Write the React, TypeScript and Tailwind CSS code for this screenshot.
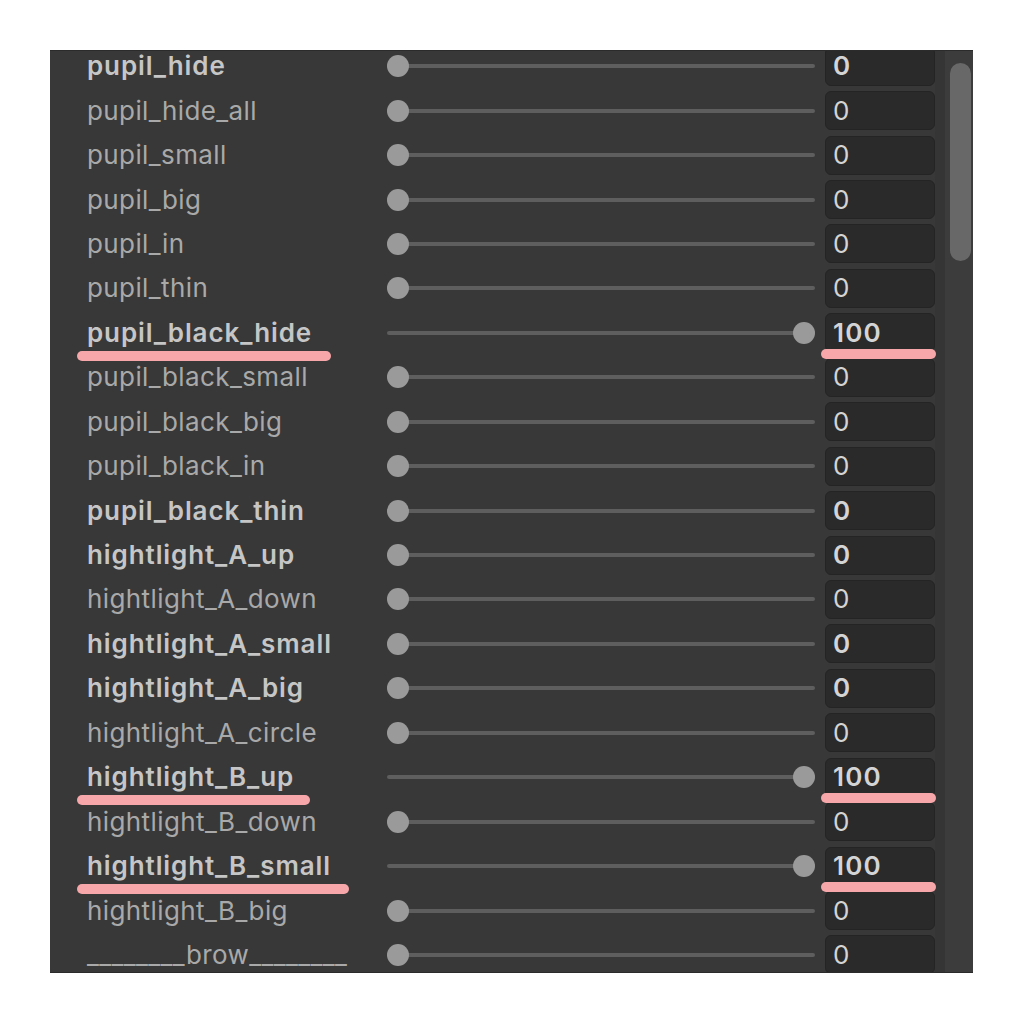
import React from "react";

type Row = {
  name: string;
  value: number;
  bold?: boolean;
  mark?: number; // width of the pink underline under the label
};

const rows: Row[] = [
  { name: "pupil_hide", value: 0, bold: true },
  { name: "pupil_hide_all", value: 0 },
  { name: "pupil_small", value: 0 },
  { name: "pupil_big", value: 0 },
  { name: "pupil_in", value: 0 },
  { name: "pupil_thin", value: 0 },
  { name: "pupil_black_hide", value: 100, bold: true, mark: 254 },
  { name: "pupil_black_small", value: 0 },
  { name: "pupil_black_big", value: 0 },
  { name: "pupil_black_in", value: 0 },
  { name: "pupil_black_thin", value: 0, bold: true },
  { name: "hightlight_A_up", value: 0, bold: true },
  { name: "hightlight_A_down", value: 0 },
  { name: "hightlight_A_small", value: 0, bold: true },
  { name: "hightlight_A_big", value: 0, bold: true },
  { name: "hightlight_A_circle", value: 0 },
  { name: "hightlight_B_up", value: 100, bold: true, mark: 233 },
  { name: "hightlight_B_down", value: 0 },
  { name: "hightlight_B_small", value: 100, bold: true, mark: 272 },
  { name: "hightlight_B_big", value: 0 },
  { name: "________brow________", value: 0 },
];

function Slider({ value }: { value: number }) {
  return (
    <div className="relative w-[428px] h-[22px] flex items-center">
      <div className="w-full h-[4px] rounded-full bg-[#5e5e5e]" />
      <div
        className={`absolute top-0 w-[22px] h-[22px] rounded-full bg-[#9a9a9a] ${
          value >= 100 ? "right-0" : "left-0"
        }`}
      />
    </div>
  );
}

function ShapeRow({ row }: { row: Row }) {
  return (
    <div className="relative h-[44.45px] shrink-0 flex items-center">
      <div
        className={`w-[337px] pl-[37px] text-[26px] leading-none ${
          row.bold
            ? "font-semibold tracking-[0.9px] text-[#c6c6c6]"
            : "font-normal tracking-[0.4px] text-[#a9a9a9]"
        }`}
      >
        {row.name}
      </div>
      <Slider value={row.value} />
      <div className="ml-[10px] w-[110px] h-[39px] rounded-[6px] bg-[#2a2a2a] border border-[#242424] flex items-center pl-[7px]">
        <span
          className={`text-[26px] leading-none tracking-[1.2px] text-[#d4d4d4] ${
            row.bold ? "font-semibold" : "font-normal"
          }`}
        >
          {row.value}
        </span>
      </div>

      {row.mark && (
        <>
          <div
            className="absolute z-10 left-[27px] top-[40px] h-[10px] rounded-full bg-[#f7a7aa]"
            style={{ width: row.mark }}
          />
          <div className="absolute z-10 left-[771px] top-[38px] w-[115px] h-[10px] rounded-full bg-[#f7a7aa]" />
        </>
      )}
    </div>
  );
}

export default function App() {
  return (
    <div
      className="w-[1024px] h-[1024px] bg-white pt-[50px] pl-[50px]"
      style={{ fontFamily: "Inter, 'Noto Sans', sans-serif" }}
    >
      <div className="w-[923px] h-[923px] bg-[#383838] overflow-hidden flex border-t border-b border-[#2b2b2b]">
        <div className="w-[885px] flex flex-col -mt-[7px]">
          {rows.map((r) => (
            <ShapeRow key={r.name} row={r} />
          ))}
        </div>
        <div className="w-[10px] bg-[#353535]" />
        <div className="w-[28px] bg-[#3c3c3c] pt-[12px] pl-[5px]">
          <div className="w-[21px] h-[198px] rounded-full bg-[#686868]" />
        </div>
      </div>
    </div>
  );
}
